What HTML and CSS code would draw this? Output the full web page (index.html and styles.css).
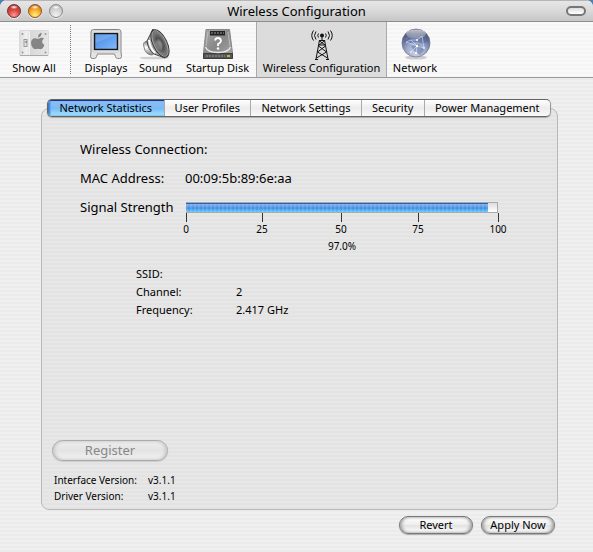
FILE: index.html
```
<!DOCTYPE html>
<html lang="en">
<head>
<meta charset="utf-8">
<title>Wireless Configuration</title>
<link rel="stylesheet" href="styles.css">
</head>
<body>
<div class="window">
  <header class="titlebar">
    <div class="lights">
      <button class="light red" aria-label="Close"></button>
      <button class="light amber" aria-label="Minimize"></button>
      <button class="light grey" aria-label="Zoom"></button>
    </div>
    <h1>Wireless Configuration</h1>
    <button class="pill" aria-label="Toggle toolbar"></button>
  </header>

  <nav class="toolbar">
    <button class="tool show-all">
      <svg width="32" height="32" viewBox="0 0 32 32">
        <defs><linearGradient id="plate" x2="1" y2="0"><stop offset="0" stop-color="#dcdcdc"/><stop offset=".25" stop-color="#f1f1f1"/><stop offset=".38" stop-color="#d8d8d8"/><stop offset="1" stop-color="#e6e6e6"/></linearGradient></defs>
        <rect x="1.500" y="2.500" width="29" height="25" rx="1" fill="url(#plate)" stroke="#dadada"/>
        <path d="M2 27.500h28" stroke="#aaa"/>
        <path d="M11.500 3v24" stroke="#f4f4f4"/>
        <rect x="6" y="11.500" width="3" height="7" fill="#e4e4e4" stroke="#888" stroke-width=".8"/><path d="M7 14h2" stroke="#666"/>
        <g fill="#999"><circle cx="4.500" cy="6" r="1"/><circle cx="4.500" cy="24.500" r="1"/><circle cx="27.500" cy="6" r="1"/><circle cx="27.500" cy="24.500" r="1"/></g>
        <path d="M20 11c-1.500-.8-4-1.500-5.800.5-1.900 2.200-1.200 6 .6 8.300 1.900 2.300 3.200.9 5.200.9s3.200 1.500 4.900-.9c.8-1 1.300-2 1.500-3-2.800-1.300-3-4.600-.3-6-1.500-2-4.100-1-6.100.2zM20 9.500c-.2-2.500 1.600-4.500 3.600-4.800.2 2.500-1.500 4.700-3.600 4.800z" fill="#858585"/>
      </svg>
      <span>Show All</span>
    </button>
    <div class="divider"></div>
    <button class="tool displays">
      <svg width="32" height="32" viewBox="0 0 32 32">
        <defs><linearGradient id="screen" x2="1" y2="1"><stop offset="0" stop-color="#4589e0"/><stop offset=".55" stop-color="#65a2f0"/><stop offset="1" stop-color="#8abcfa"/></linearGradient></defs>
        <path d="M3.500 1.500h25q2.500 0 2.500 2.500v20l.5 4.500q0 2-2 2h-2q-1.500 0-2-2l-1-2.500h-17l-1 2.500q-.5 2-2 2h-2q-2 0-2-2L1 24V4q0-2.500 2.500-2.500z" fill="#e4e4e4" stroke="#858585"/>
        <rect x="3" y="3" width="26" height="21" rx="1.500" fill="#f8f8f8" stroke="#bbb" stroke-width=".7"/>
        <rect x="4.500" y="5.500" width="23" height="16" fill="url(#screen)" stroke="#181818" stroke-width="1.500"/>
        <path d="M5.500 6.500h21L5.500 15z" fill="#9cc4f5" opacity=".35"/>
      </svg>
      <span>Displays</span>
    </button>
    <button class="tool sound">
      <svg width="32" height="32" viewBox="0 0 32 32">
        <defs><linearGradient id="magnet" y2="1" x2="0"><stop offset="0" stop-color="#777"/><stop offset=".45" stop-color="#fff"/><stop offset="1" stop-color="#777"/></linearGradient><radialGradient id="cone"><stop offset="0" stop-color="#999"/><stop offset=".4" stop-color="#505050"/><stop offset=".8" stop-color="#7c7c7c"/><stop offset="1" stop-color="#444"/></radialGradient></defs>
        <ellipse cx="14" cy="30" rx="15" ry="1.300" fill="#d0d0d0"/>
        <path d="M7 13q-5 1-3 6 1 7 7 8 4 0 4-5z" fill="url(#magnet)" stroke="#888"/>
        <path d="M13 1L7 13q1 9 7 13l11 4z" fill="#aaa" stroke="#444"/>
        <path d="M9 12q1 8 6 13" stroke="#fff" stroke-width="2" fill="none"/>
        <ellipse cx="20" cy="15.500" rx="7" ry="15" transform="rotate(-26 20 15.500)" fill="url(#cone)" stroke="#3a3a3a"/>
        <ellipse cx="20" cy="15.500" rx="6" ry="14" transform="rotate(-26 20 15.500)" fill="none" stroke="#aaa" stroke-width=".8"/>
        <path d="M15 17q0-6 3-4 5 3 4 9-4 0-7-5z" fill="#888" opacity=".7"/>
      </svg>
      <span>Sound</span>
    </button>
    <button class="tool startup">
      <svg width="32" height="32" viewBox="0 0 32 32">
        <defs><linearGradient id="disk" x2="1" y2="1"><stop offset="0" stop-color="#aaa"/><stop offset=".5" stop-color="#888"/><stop offset="1" stop-color="#aaa"/></linearGradient></defs>
        <path d="M4 1.500h23.500L30.500 25v5.500h-29V25z" fill="url(#disk)" stroke="#888"/>
        <path d="M1.500 25.500h29v5h-29z" fill="#555" stroke="#3c3c3c"/>
        <path d="M4 28h19" stroke="#999" stroke-dasharray="2 1"/><path d="M25 28h3" stroke="#e6d428" stroke-width="1.500"/>
        <path d="M3.500 19q2 5.500 12.500 5.500T28.500 19" stroke="#e8e8e8" stroke-width="1.300" fill="none"/><path d="M6 4L4 18M26 4l2 14" stroke="#bbb" fill="none"/>
        <rect x="8" y="3" width="15" height="4.500" fill="#222"/><path d="M9 5h13" stroke="#999" stroke-dasharray="2 1"/>
        <path d="M13 12.500q.5-2.500 3-2.500t3 2.500q0 2-3 3.500V18" fill="none" stroke="#fff" stroke-width="1.800"/><circle cx="16" cy="20.500" r="1.200" fill="#fff"/>
      </svg>
      <span>Startup Disk</span>
    </button>
    <button class="tool wireless" aria-current="page">
      <svg width="32" height="32" viewBox="0 0 32 32" fill="none" stroke="#111">
        <circle cx="16" cy="7.500" r="2" fill="#111" stroke="none"/>
        <path d="M12.500 5.500q-1.500 2 0 4M19.500 5.500q1.500 2 0 4M10 3.500q-3 4 0 8M22 3.500q3 4 0 8M7.500 2.500q-3.500 5 0 10M24.500 2.500q3.500 5 0 10"/>
        <path d="M16 8v4M13 12.500h6M13.500 12L10 31M18.500 12L22 31M13 17h6M13 12.500l6 4.500M19 12.500L13 17M12.500 18l8 6M19.500 18l-8 6M11.500 24l10 6M20.500 24l-10 6M9 31.500h3M20 31.500h3"/>
      </svg>
      <span>Wireless Configuration</span>
    </button>
    <button class="tool network">
      <svg width="32" height="32" viewBox="0 0 32 32">
        <defs><radialGradient id="globe" cx=".5" cy=".85" r=".85"><stop offset="0" stop-color="#ccd3ea"/><stop offset=".4" stop-color="#a0abcc"/><stop offset=".7" stop-color="#69759f"/><stop offset="1" stop-color="#353c50"/></radialGradient><linearGradient id="shine" x2="0" y2="1"><stop offset="0" stop-color="#fff" stop-opacity=".7"/><stop offset="1" stop-color="#fff" stop-opacity=".1"/></linearGradient></defs>
        <ellipse cx="17" cy="29.500" rx="11" ry="2" fill="#ccc"/>
        <circle cx="17" cy="15" r="14" fill="url(#globe)" stroke="#6b7288" stroke-width=".7"/>
        <path d="M4 14l6-4 8 1 8-2 4 4-6 3-5-2-9 1zM12 18l8-2 5 6-4 5-6-4z" fill="#475b8e" opacity=".4"/>
        <path d="M7 14l5-2 6 0 5-4M12 12l6 6 7 2M18 18l-6 6M18 18l-1 8M23 8l2 12M7 14l11 4" stroke="#d8e6ff" stroke-width=".6" fill="none"/>
        <ellipse cx="17" cy="6" rx="10" ry="4.500" fill="url(#shine)"/>
        <g fill="#fff"><circle cx="18" cy="12" r="1"/><circle cx="18" cy="18" r="1.200"/><circle cx="25" cy="20" r=".8"/><circle cx="12" cy="24" r=".8"/><circle cx="17" cy="25" r="1"/></g>
      </svg>
      <span>Network</span>
    </button>
  </nav>

  <main class="content">
    <section class="panel">
      <div class="tabs" role="tablist">
        <button class="tab" role="tab" aria-selected="true">Network Statistics</button>
        <button class="tab" role="tab" aria-selected="false">User Profiles</button>
        <button class="tab" role="tab" aria-selected="false">Network Settings</button>
        <button class="tab" role="tab" aria-selected="false">Security</button>
        <button class="tab" role="tab" aria-selected="false">Power Management</button>
      </div>
      <div class="stats">
        <p class="line">Wireless Connection:</p>
        <dl class="line pair"><dt>MAC Address:</dt><dd>00:09:5b:89:6e:aa</dd></dl>
        <div class="line pair">
          <span id="signal">Signal Strength</span>
          <div class="gauge">
            <div class="bar" role="meter" aria-labelledby="signal" aria-valuemin="0" aria-valuemax="100" aria-valuenow="97"><div class="fill" style="width: 97%"></div></div>
            <div class="scale"><span>0</span><span>25</span><span>50</span><span>75</span><span>100</span></div>
            <div class="percent">97.0%</div>
          </div>
        </div>
        <dl class="details">
          <dt>SSID:</dt><dd></dd>
          <dt>Channel:</dt><dd>2</dd>
          <dt>Frequency:</dt><dd>2.417 GHz</dd>
        </dl>
      </div>
      <footer class="versions">
        <button class="aqua register" disabled>Register</button>
        <dl>
          <dt>Interface Version:</dt><dd>v3.1.1</dd>
          <dt>Driver Version:</dt><dd>v3.1.1</dd>
        </dl>
      </footer>
    </section>
    <div class="actions">
      <button class="aqua">Revert</button>
      <button class="aqua">Apply Now</button>
    </div>
  </main>
</div>
</body>
</html>
```
FILE: styles.css
```
* { box-sizing: border-box; }
html { background: #4d7fb4; }
body { margin: 0; font: 11px/16px "Noto Sans", "Open Sans", sans-serif; color: #000; }
button { margin: 0; padding: 0; border: 0; background: none; font: inherit; color: inherit; }
h1, p, dl, dd { margin: 0; }

.window {
  display: flex; flex-direction: column; min-height: 100vh;
  border-radius: 7px 7px 0 0; overflow: hidden;
  background: repeating-linear-gradient(#f0f0f0 0 2px, #ebebeb 2px 4px);
}
.titlebar {
  display: grid; grid-template-columns: 64px 1fr 64px; align-items: center;
  height: 22px; padding: 0 7px;
  background: linear-gradient(#e6e6e6, #d9d9d9 50%, #c6c6c6);
  border-top: 1px solid #b5b5b5; border-bottom: 1px solid #8e8e8e;
}
.titlebar h1 { font-size: 13px; line-height: 20px; font-weight: 400; text-align: center; }
.lights { display: flex; gap: 7px; }
.light { width: 14px; height: 14px; border: 1px solid #777; border-radius: 50%; box-shadow: 0 1px 0 #eee; }
.red { border-color: #6e302f; background: radial-gradient(ellipse 4px 2px at 50% 18%, #fff, transparent), radial-gradient(circle at 50% 85%, #ff9a91, #dc4742 45%, #9c2d2b); }
.amber { border-color: #8a5522; background: radial-gradient(ellipse 4px 2px at 50% 18%, #fff, transparent), radial-gradient(circle at 50% 85%, #fff27a, #f9a72b 50%, #b05d13); }
.grey { border-color: #888; background: radial-gradient(ellipse 4px 2px at 50% 18%, #fff, transparent), radial-gradient(circle at 50% 85%, #f2f2f2, #ccc 60%, #aaa); }
.pill { justify-self: end; width: 20px; height: 10px; border: 2px solid #777; border-radius: 5px; background: linear-gradient(#ddd, #fff); }

.toolbar {
  display: flex; height: 56px;
  background: repeating-linear-gradient(#f9f9f9 0 2px, #f5f5f5 2px 4px);
  border-bottom: 1px solid #999;
}
.tool { display: flex; flex-direction: column; align-items: center; padding: 6px 5px 0; white-space: nowrap; }
.tool svg { display: block; flex: none; }
.show-all { width: 68px; }
.divider { width: 2px; margin: 3px 8px 3px 2px; border-left: 1px dotted #777; }
.displays { width: 52px; }
.sound { width: 47px; }
.startup { width: 77px; }
.wireless { width: 131px; padding: 6px 0 0; background: #dcdcdc; border: solid #aaa; border-width: 0 1px; }
.network { width: 56px; }

.content { flex: 1; display: flex; flex-direction: column; padding: 30px 35px 18px 41px; }
.panel {
  flex: 1; display: flex; flex-direction: column;
  border: 1px solid #b8b8b8; border-radius: 8px;
  background: repeating-linear-gradient(#e7e7e7 0 2px, #e3e3e3 2px 4px);
}
.tabs {
  display: grid; grid-template-columns: 116fr 87fr 111fr 63fr 127fr;
  height: 18px; margin: -10px 6px 0 5px; overflow: hidden;
  border: 1px solid #666; border-right-color: #999; border-radius: 5px;
  background: linear-gradient(#fff, #ececec 50%, #fafafa);
  box-shadow: 0 1px 1px #aaa;
}
.tab { border-left: 1px solid #aaa; line-height: 16px; white-space: nowrap; }
.tab:first-child { border-left: 0; }
.tab[aria-selected="true"] {
  background: linear-gradient(#8fbcec, #7fbbf5 45%, #74b7f5 50%, #a5e7ff);
  box-shadow: inset 0 1px #173292, inset 2px 0 2px #3d78ca;
}
.stats { flex: 1; padding: 22px 59px 0 38px; font-size: 13px; line-height: 20px; }
.line { margin-bottom: 9px; }
.pair { display: grid; grid-template-columns: 105px 1fr; }
.gauge { padding: 5px 0 0 1px; font-size: 10px; line-height: 14px; }
.bar { height: 11px; border: 1px solid #aaa; border-left: 0; background: linear-gradient(#ddd, #fff); }
.fill {
  height: 9px; border-top: 1px solid #2c60b4;
  background: repeating-linear-gradient(90deg, #ffffff1c 0 2px, transparent 2px 4px), linear-gradient(#80b0ea, #5698e5 40%, #408ae0 50%, #68ccff);
}
.scale { display: grid; grid-template-columns: 76fr 79fr 77fr 80fr 0; }
.scale span { display: flex; flex-direction: column; align-items: center; width: 30px; margin-left: -15px; }
.scale span::before { content: ""; width: 1px; height: 9px; background: #333; }
.percent { margin-top: 3px; text-align: center; }
.details { display: grid; grid-template-columns: 100px 1fr; margin: 12px 0 0 56px; font-size: 11px; line-height: 18px; }

.aqua {
  width: 74px; height: 18px; border: 1px solid #777; border-radius: 9px;
  background: linear-gradient(#fff, #eee 48%, #e2e2e2 52%, #fff);
  box-shadow: inset 2px 0 3px #aaa, inset -2px 0 3px #aaa, 0 1px 1px #aaa;
  line-height: 16px;
}
.register { width: 116px; height: 21px; border-color: #aaa; border-radius: 11px; color: #888; font-size: 13px; line-height: 19px; background: linear-gradient(#eee, #e3e3e3 50%, #f2f2f2); box-shadow: inset 2px 0 3px #ccc, inset -2px 0 3px #ccc, 0 1px 1px #ccc; }
.versions { padding: 0 10px 5px; }
.versions dl { display: grid; grid-template-columns: 94px 1fr; margin: 11px 0 0 2px; font-size: 10px; }
.actions { display: flex; justify-content: flex-end; gap: 8px; padding: 6px 3px 0; }
```
